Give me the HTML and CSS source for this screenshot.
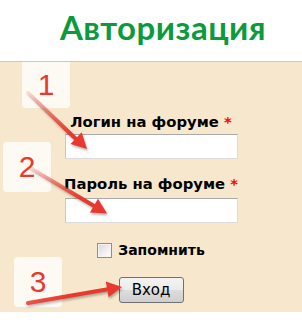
FILE: index.html
```html
<!DOCTYPE html>
<html lang="ru">
<head>
<meta charset="utf-8">
<title>Авторизация</title>
<link rel="stylesheet" href="styles.css">
</head>
<body>
<div class="page">
  <header class="header">
    <h1 class="title">Авторизация</h1>
  </header>
  <form class="panel">
    <label class="label label-login" for="login">Логин на форуме <span class="req">*</span></label>
    <input class="field" id="login" type="text">
    <label class="label label-pass" for="pass">Пароль на форуме <span class="req">*</span></label>
    <input class="field" id="pass" type="password">
    <div class="remember">
      <span class="check"></span>
      <span class="remember-text">Запомнить</span>
    </div>
    <button class="btn" type="button">Вход</button>
  </form>

  <div class="step step-1">1</div>
  <div class="step step-2">2</div>
  <div class="step step-3">3</div>

  <svg class="arrows" width="302" height="335" viewBox="0 0 302 335">
    <defs>
      <linearGradient id="g1" gradientUnits="userSpaceOnUse" x1="28" y1="93" x2="70" y2="133">
        <stop offset="0" stop-color="#e8392e" stop-opacity="0.15"/>
        <stop offset="1" stop-color="#e8392e" stop-opacity="1"/>
      </linearGradient>
      <linearGradient id="g2" gradientUnits="userSpaceOnUse" x1="30" y1="168" x2="80" y2="198">
        <stop offset="0" stop-color="#e8392e" stop-opacity="0.15"/>
        <stop offset="1" stop-color="#e8392e" stop-opacity="1"/>
      </linearGradient>
      <linearGradient id="g3" gradientUnits="userSpaceOnUse" x1="28" y1="303" x2="70" y2="296">
        <stop offset="0" stop-color="#e8392e" stop-opacity="0.85"/>
        <stop offset="1" stop-color="#e8392e" stop-opacity="1"/>
      </linearGradient>
    </defs>
    <g class="arrow">
      <line x1="28" y1="93" x2="77" y2="140" stroke="url(#g1)" stroke-width="4" stroke-linecap="round"/>
      <polygon points="87,149 70.5,144 81.6,132.3" fill="#e8392e"/>
    </g>
    <g class="arrow">
      <line x1="30" y1="168" x2="95" y2="206.5" stroke="url(#g2)" stroke-width="4" stroke-linecap="round"/>
      <polygon points="107,213.5 89.9,212.5 98,198.8" fill="#e8392e"/>
    </g>
    <g class="arrow">
      <line x1="28" y1="303" x2="108" y2="289.2" stroke="url(#g3)" stroke-width="4" stroke-linecap="round"/>
      <polygon points="122,287 108.6,297.3 105.8,281.5" fill="#e8392e"/>
    </g>
  </svg>
</div>
</body>
</html>
```

FILE: styles.css
```css
html, body {
  margin: 0;
  padding: 0;
  background: #ffffff;
}

.page {
  position: relative;
  width: 302px;
  height: 335px;
  overflow: hidden;
  font-family: "DejaVu Sans", Verdana, sans-serif;
}

.header {
  height: 61px;
  display: flex;
  align-items: flex-start;
  padding-left: 24px;
  justify-content: center;
}

.title {
  margin: 7px 0 0 0;
  font-family: Lato, "Open Sans", sans-serif;
  font-weight: 700;
  font-size: 33px;
  line-height: 40px;
  color: #0b9a3c;
  letter-spacing: 0.5px;
}

.panel {
  margin: 0;
  border-top: 1px solid #d9c6a2;
  background: #f6e7cd;
  height: 251px;
  padding-top: 51px;
  box-sizing: border-box;
  display: flex;
  flex-direction: column;
  align-items: center;
}

.label {
  font-weight: 700;
  font-size: 14.8px;
  line-height: 17px;
  color: #000000;
}

.label-login {
  margin-bottom: 4px;
}

.label-pass {
  margin-top: 16px;
  margin-bottom: 6px;
}

.req {
  color: #ff0000;
}

.field {
  width: 173px;
  height: 25px;
  box-sizing: border-box;
  margin: 0;
  padding: 2px 4px;
  background: #ffffff;
  border: 1px solid #dcdcdc;
  border-top-color: #a9a9a9;
  border-left-color: #c8c8c8;
  outline: none;
}

.remember {
  margin-top: 19px;
  display: flex;
  align-items: center;
  gap: 6px;
  height: 17px;
}

.check {
  width: 13px;
  height: 13px;
  border: 1px solid #8e8f8f;
  background: linear-gradient(135deg, #d6d6d6 0%, #f2f2f2 60%, #ffffff 100%);
  box-shadow: inset 0 0 0 1px #f4f4f4;
}

.remember-text {
  font-weight: 700;
  font-size: 14px;
  line-height: 17px;
  color: #000000;
}

.btn {
  margin-top: 18px;
  width: 65px;
  height: 26px;
  box-sizing: border-box;
  padding: 0;
  border: 1px solid #707070;
  border-radius: 3px;
  background: linear-gradient(#f3f3f3 0%, #ebebeb 50%, #dddddd 51%, #cfcfcf 100%);
  font-family: "DejaVu Sans", Tahoma, sans-serif;
  font-size: 15px;
  color: #000000;
}

.step {
  position: absolute;
  width: 48px;
  background: rgba(255, 255, 255, 0.78);
  border-radius: 4px;
  color: #e8392e;
  font-family: "Liberation Sans", Arial, sans-serif;
  font-size: 30px;
  display: flex;
  align-items: center;
  justify-content: center;
}

.step-1 {
  left: 22px;
  top: 62px;
  height: 46px;
  border-radius: 0 0 4px 4px;
}

.step-2 {
  left: 3px;
  top: 142px;
  height: 50px;
}

.step-3 {
  left: 14px;
  top: 257px;
  height: 50px;
}

.arrows {
  position: absolute;
  left: 0;
  top: 0;
}

.arrow {
  filter: drop-shadow(1px 2px 1px rgba(0, 0, 0, 0.28));
}
```
